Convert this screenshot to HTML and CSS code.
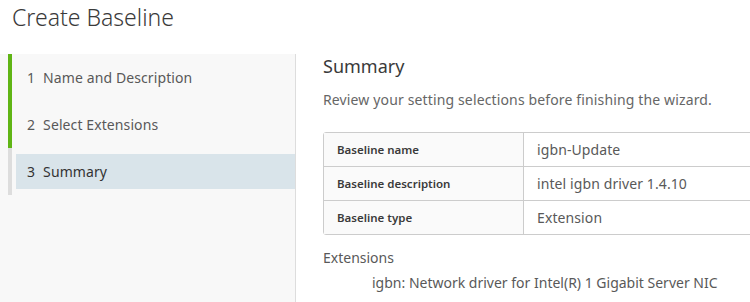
FILE: index.html
```html
<!DOCTYPE html>
<html>
<head>
    <meta charset="UTF-8">
    <title>Create Baseline</title>
    <link rel="stylesheet" href="styles.css">
</head>
<body>
    <div class="wizard">
        <!-- Title -->
        <h1 class="wizard-title">Create Baseline</h1>
        <div class="wizard-body">
            <!-- Steps on the left -->
            <div class="steps">
                <div class="step done"><div class="step-link"><span class="step-num">1</span>Name and Description</div></div>
                <div class="step done"><div class="step-link"><span class="step-num">2</span>Select Extensions</div></div>
                <div class="step current"><div class="step-link"><span class="step-num">3</span>Summary</div></div>
            </div>
            <!-- Summary page -->
            <div class="content">
                <h2 class="page-title">Summary</h2>
                <p class="page-desc">Review your setting selections before finishing the wizard.</p>
                <table class="summary-table">
                    <tr>
                        <th>Baseline name</th>
                        <td>igbn-Update</td>
                    </tr>
                    <tr>
                        <th>Baseline description</th>
                        <td>intel igbn driver 1.4.10</td>
                    </tr>
                    <tr>
                        <th>Baseline type</th>
                        <td>Extension</td>
                    </tr>
                </table>
                <div class="ext-label">Extensions</div>
                <div class="ext-item">igbn: Network driver for Intel(R) 1 Gigabit Server NIC</div>
            </div>
        </div>
    </div>
</body>
</html>
```
FILE: styles.css
```css
html, body {
    margin: 0;
    overflow: hidden;
}
body {
    font-family: "Noto Sans", "Open Sans", sans-serif;
    background-color: #fff;
    color: #595959;
}
.wizard-title {
    margin: 0;
    padding: 2px 0 0 12px;
    height: 52px;
    font-size: 23px;
    font-weight: 300;
    line-height: 30px;
    color: #3a3a3a;
}
.wizard-body {
    display: flex;
    height: 248px;
}
.steps {
    width: 287px;
    padding-left: 8px;
    background-color: #f8f8f8;
    border-right: 1px solid #ddd;
}
.step {
    border-left: 4px solid #ddd;
    height: 47px;
    box-sizing: border-box;
    padding: 6px 0 6px 4px;
}
.step.done {
    border-left-color: #60b515;
}
.step-link {
    height: 35px;
    line-height: 36px;
    padding-left: 11px;
    font-size: 14px;
    letter-spacing: 0.1px;
    color: #595959;
}
.step.current .step-link {
    background-color: #d9e4ea;
    color: #333;
}
.step-num {
    display: inline-block;
    margin-right: 8px;
}
.content {
    flex: 1;
    padding-left: 27px;
    overflow: hidden;
}
.page-title {
    margin: 0;
    font-size: 18px;
    font-weight: 400;
    line-height: 24px;
    color: #3a3a3a;
}
.page-desc {
    margin: 12px 0 0 0;
    font-size: 14px;
    line-height: 20px;
    letter-spacing: 0.14px;
    color: #666;
}
.summary-table {
    margin-top: 22px;
    width: 520px;
    border-collapse: separate;
    border-spacing: 0;
    border: 1px solid #ccc;
    border-radius: 3px;
}
.summary-table th,
.summary-table td {
    height: 33px;
    padding: 0 13px;
    text-align: left;
    border-bottom: 1px solid #ccc;
}
.summary-table tr:last-child th,
.summary-table tr:last-child td {
    border-bottom: none;
}
.summary-table th {
    width: 173px;
    background-color: #fafafa;
    border-right: 1px solid #ccc;
    font-size: 11.5px;
    font-weight: 600;
    color: #3a3a3a;
}
.summary-table td {
    font-size: 14px;
    letter-spacing: 0.1px;
    color: #595959;
}
.ext-label {
    margin-top: 13px;
    font-size: 14px;
    line-height: 20px;
    color: #595959;
}
.ext-item {
    margin-top: 5px;
    padding-left: 49px;
    font-size: 14px;
    line-height: 20px;
    color: #595959;
}
```
